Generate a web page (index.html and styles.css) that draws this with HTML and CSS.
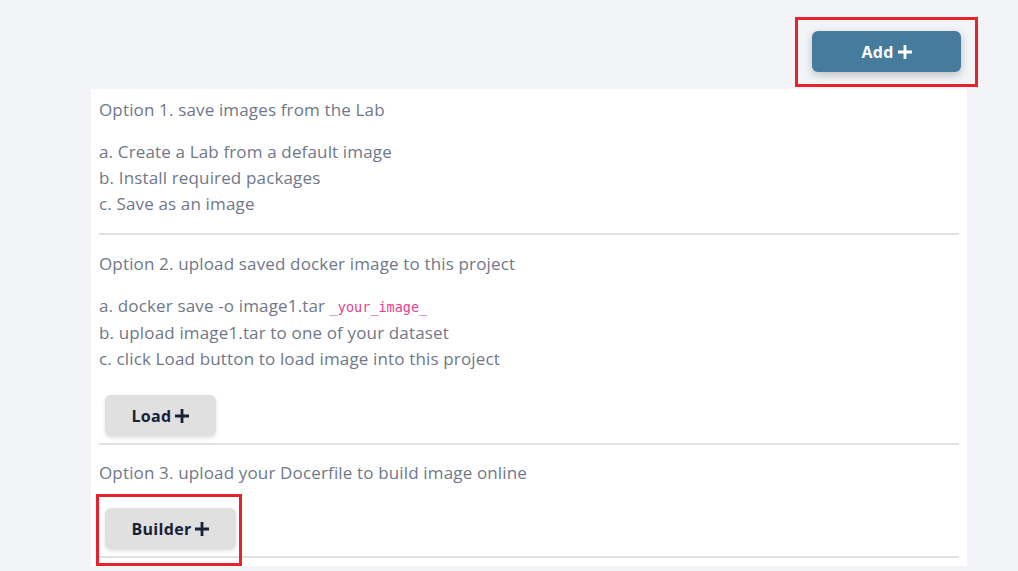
FILE: index.html
```html
<!DOCTYPE html>
<html>
<head>
<meta charset="utf-8">
<link rel="stylesheet" href="styles.css">
</head>
<body>
<div class="page">
  <div class="toolbar">
    <div class="marked marked-add">
      <button class="btn btn-primary">Add <svg class="plus" viewBox="0 0 14 14"><path d="M5.6 0h2.8v5.6H14v2.8H8.4V14H5.6V8.4H0V5.6h5.6z"/></svg></button>
    </div>
  </div>
  <div class="panel">
    <section class="option first">
      <p class="title">Option 1. save images from the Lab</p>
      <ul class="steps">
        <li>a. Create a Lab from a default image</li>
        <li>b. Install required packages</li>
        <li>c. Save as an image</li>
      </ul>
      <hr class="rule">
    </section>
    <section class="option">
      <p class="title">Option 2. upload saved docker image to this project</p>
      <ul class="steps">
        <li>a. docker save -o image1.tar <code>_your_image_</code></li>
        <li>b. upload image1.tar to one of your dataset</li>
        <li>c. click Load button to load image into this project</li>
      </ul>
      <div class="actions">
        <button class="btn btn-light btn-load">Load <svg class="plus" viewBox="0 0 14 14"><path d="M5.6 0h2.8v5.6H14v2.8H8.4V14H5.6V8.4H0V5.6h5.6z"/></svg></button>
      </div>
      <hr class="rule rule-tight">
    </section>
    <section class="option last">
      <p class="title">Option 3. upload your Docerfile to build image online</p>
      <div class="actions">
        <div class="marked marked-builder">
          <button class="btn btn-light btn-builder">Builder <svg class="plus" viewBox="0 0 14 14"><path d="M5.6 0h2.8v5.6H14v2.8H8.4V14H5.6V8.4H0V5.6h5.6z"/></svg></button>
        </div>
      </div>
      <hr class="rule rule-tight">
    </section>
  </div>
</div>
</body>
</html>
```
FILE: styles.css
```css
html, body {
  margin: 0;
  padding: 0;
  background: #f3f4f8;
  font-family: "Open Sans", "Liberation Sans", sans-serif;
}

.page {
  width: 1018px;
  height: 571px;
  overflow: hidden;
}

.toolbar {
  display: flex;
  justify-content: flex-end;
  padding: 31px 57px 0 0;
  height: 41px;
}

.marked {
  position: relative;
  display: inline-block;
}

.marked::after {
  content: "";
  position: absolute;
  border: 3px solid #e5232c;
  pointer-events: none;
}

.marked-add::after {
  left: -17px;
  right: -17px;
  top: -14px;
  bottom: -15px;
}

.marked-builder::after {
  left: -9px;
  right: -6px;
  top: -14px;
  bottom: -17px;
}

.btn {
  display: inline-flex;
  align-items: center;
  justify-content: center;
  gap: 4px;
  height: 41px;
  border: none;
  border-radius: 6px;
  font-family: "Open Sans", "Liberation Sans", sans-serif;
  font-size: 16px;
  font-weight: 700;
  letter-spacing: 0.3px;
  padding: 0;
  cursor: pointer;
}

.plus {
  width: 14px;
  height: 14px;
  fill: currentColor;
}

.btn-primary {
  width: 149px;
  background: #457b9d;
  color: #ffffff;
  box-shadow: 0 3px 8px rgba(0, 0, 0, 0.22);
}

.btn-light {
  background: #e0e0e0;
  color: #172236;
  box-shadow: 0 2px 4px rgba(0, 0, 0, 0.12);
}

.btn-load { width: 111px; }
.btn-builder { width: 131px; }

.panel {
  margin: 17px 0 0 91px;
  width: 860px;
  background: #ffffff;
  padding: 9px 8px 8px 8px;
}

.option .title {
  margin: 17px 0 0 0;
  font-size: 17px;
  letter-spacing: 0.15px;
  line-height: 24px;
  color: #6f7889;
}

.option.first .title { margin-top: 0; }
.option.last .title { margin-top: 16px; }

.steps {
  list-style: none;
  margin: 17px 0 0 0;
  padding: 0;
}

.steps li {
  font-size: 17px;
  letter-spacing: 0.15px;
  line-height: 26px;
  color: #6f7889;
}

code {
  font-family: "DejaVu Sans Mono", "Liberation Mono", monospace;
  font-size: 13.5px;
  letter-spacing: 0;
  color: #e83e8c;
}

.actions {
  display: flex;
  padding-left: 6px;
  margin-top: 23px;
}

.rule {
  border: none;
  height: 2px;
  background: #dee2e6;
  margin: 16px 0 0 0;
}

.rule-tight { margin-top: 7px; }
```
